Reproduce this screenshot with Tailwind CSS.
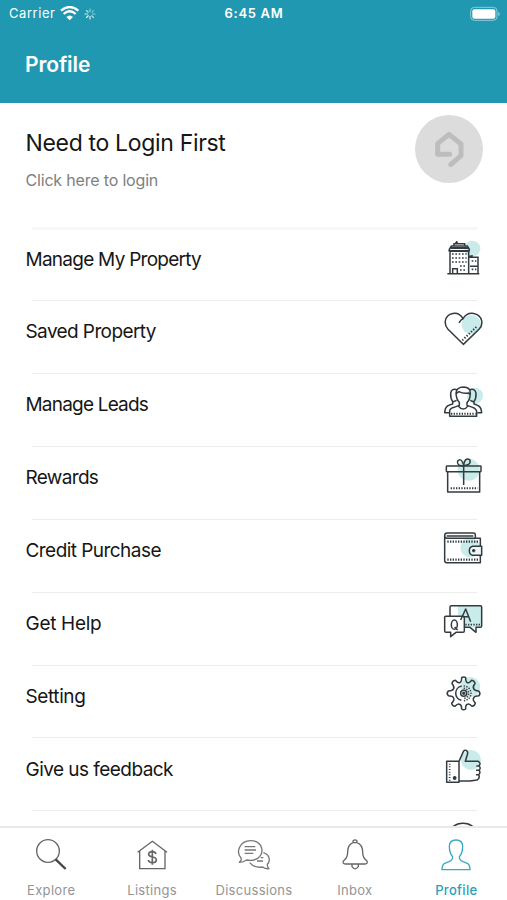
<!DOCTYPE html>
<html lang="en">
<head>
<meta charset="utf-8">
<title>Profile</title>
<script src="https://cdn.jsdelivr.net/npm/@tailwindcss/browser@4"></script>
</head>
<body class="bg-white font-['Inter',sans-serif]">
<div class="flex flex-col w-[507px] h-[900px] overflow-hidden">
  <header class="h-[103px] shrink-0 bg-[#2198b1] text-white">
    <div class="grid grid-cols-3 items-center h-[27px] pl-[9px] pr-[6px]">
      <div class="flex items-center text-[13px] tracking-[0.55px]">
        <span>Carrier</span>
        <svg class="w-[19px] h-[15px] ml-[5px]" viewBox="184 16 57 45" fill="none" stroke="#fff" stroke-width="7"><path d="M187 30Q213 8 239 30M195 40Q213 24 231 40"/><path d="M203 49Q213 40 223 49L213 59Z" fill="#fff" stroke="none"/></svg>
        <svg class="w-[12px] h-[12px] ml-[5px]" viewBox="0 0 24 24" stroke="#fff" stroke-width="2.2" stroke-linecap="round"><path d="M12 2v5" opacity=".6"/><path d="M19 5l-3 3.500" opacity=".5"/><path d="M22 12h-5" opacity=".5"/><path d="M19 19l-3.500-3.500" opacity=".7"/><path d="M12 22v-5" opacity=".9"/><path d="M5 19l3.500-3.500"/><path d="M2 12h5" opacity=".8"/><path d="M5 5l3.500 3.500" opacity=".7"/></svg>
      </div>
      <div class="text-center text-[13px] font-semibold tracking-[0.7px] pr-[2px] pt-[1px]">6:45 AM</div>
      <svg class="w-[32px] h-[16px] justify-self-end" viewBox="208 16 96 48"><rect x="213" y="20" width="79" height="39" rx="11" fill="none" stroke="#8fcbd8" stroke-width="3"/><rect x="218" y="26" width="69" height="28" rx="6" fill="#fff"/><path d="M296 33q9 7 0 14z" fill="#8fcbd8"/></svg>
    </div>
    <h1 class="pl-[25px] pt-[22px] text-[21px] leading-[32px] font-semibold tracking-[-0.1px]">Profile</h1>
  </header>

  <main class="flex-1 min-h-0 overflow-hidden">
    <section class="flex justify-between h-[123.500px] pl-[25.500px] pr-[24.500px] pt-[12px]">
      <div>
        <h2 class="pt-[13px] text-[23px] leading-[30px] tracking-[-0.33px] text-[#161616]">Need to Login First</h2>
        <p class="pt-[11px] text-[16px] leading-[22px] tracking-[-0.18px] text-[#808080]">Click here to login</p>
      </div>
      <svg class="w-[68px] h-[68px]" viewBox="44 346 204 204"><circle cx="146" cy="448" r="102" fill="#dcdcdc"/><path d="M148 464H112V432L146 404L182 433V468L151 495" fill="none" stroke="#bdbdbd" stroke-width="15" stroke-linecap="round" stroke-linejoin="round"/></svg>
    </section>
    <div class="h-[3px] ml-[32px] mr-[30px] bg-[#f7f7f7]"></div>

    <ul class="text-[19px] leading-[24px] tracking-[-0.5px] text-[#161616]">
      <li class="h-[70.800px] pt-[8.800px]">
        <div class="flex justify-between pl-[25.500px] pr-[24px]"><span class="pt-[10px] tracking-[-0.74px]">Manage My Property</span>
        <svg class="w-[40px] h-[40px]" viewBox="39 39 120 120" fill="none" stroke="#333b40" stroke-width="4.5"><circle cx="127" cy="71" r="24" fill="#c9ebea" stroke="none"/><path d="M60 146V79H116V146M118 97H144V146M52 146H148M55 77H120M57 75L64 63H112L119 75M72 62V56H104V62M80 56V48M75 54H84M68 145V131H82V145M118 94H126V90M120 124H143"/><path d="M62 69H115" stroke-width="6"/><path d="M66 87H110M66 99H110M66 111H110M90 123H110M90 135H110M125 108H139M125 133H139" stroke-width="5" stroke-dasharray="5 5"/></svg></div>
      </li>
      <li class="h-[72.850px] pt-[9.850px] relative before:absolute before:top-0 before:left-[32px] before:right-[30px] before:h-px before:bg-[#ececec]">
        <div class="flex justify-between pl-[25.500px] pr-[24px]"><span class="pt-[10px] tracking-[-0.6px]">Saved Property</span>
        <svg class="w-[40px] h-[40px]" viewBox="39 258 120 120" fill="none" stroke="#333b40" stroke-width="4.5"><circle cx="124" cy="302" r="29" fill="#c9ebea" stroke="none"/><path d="M100 361L54 316Q44 305 46 291C50 266 84 258 99 284C115 258 149 266 155 290Q158 305 147 316L100 361ZM99 284Q92 287 87 297"/><path d="M97 349L142 306" stroke-width="6" stroke-dasharray="4 5"/></svg></div>
      </li>
      <li class="h-[72.850px] pt-[9.850px] relative before:absolute before:top-0 before:left-[32px] before:right-[30px] before:h-px before:bg-[#ececec]">
        <div class="flex justify-between pl-[25.500px] pr-[24px]"><span class="pt-[10.500px] tracking-[-0.8px]">Manage Leads</span>
        <svg class="w-[40px] h-[40px]" viewBox="39 27 120 120" fill="none" stroke="#333b40" stroke-width="4.5" stroke-linejoin="round"><circle cx="135" cy="65" r="24" fill="#c9ebea" stroke="none"/><path d="M59 127V111Q60 103 72 100L88 94V85Q79 77 78 57Q80 39 101 39Q121 40 121 57Q121 77 111 86V94L128 100Q139 104 140 112V127ZM78 59L87 53Q99 60 116 57L121 62M84 95Q100 115 115 95"/><path d="M81 47Q65 42 62 57Q61 73 68 83V90Q49 94 46 105L44 116H58M68 84L80 79M119 47Q134 42 138 57Q139 73 132 83V90Q149 94 153 105L155 116H142M132 84L121 79"/><path d="M63 119H137" stroke-width="6" stroke-dasharray="4 4"/></svg></div>
      </li>
      <li class="h-[72.850px] pt-[9.850px] relative before:absolute before:top-0 before:left-[32px] before:right-[30px] before:h-px before:bg-[#ececec]">
        <div class="flex justify-between pl-[25.500px] pr-[24px]"><span class="pt-[10.500px] tracking-[-0.67px]">Rewards</span>
        <svg class="w-[40px] h-[40px]" viewBox="39 245 120 120" fill="none" stroke="#333b40" stroke-width="4.5" stroke-linejoin="round"><circle cx="116" cy="286" r="33" fill="#c9ebea" stroke="none"/><rect x="49" y="275" width="104" height="17" rx="2"/><path d="M53 292V353H149V292M101 276V332M101 275Q79 275 83 260Q93 248 101 272Q105 248 119 256Q126 271 101 274" /><path d="M62 342H143" stroke-width="6" stroke-dasharray="4 4"/></svg></div>
      </li>
      <li class="h-[72.850px] pt-[9.850px] relative before:absolute before:top-0 before:left-[32px] before:right-[30px] before:h-px before:bg-[#ececec]">
        <div class="flex justify-between pl-[25.500px] pr-[24px]"><span class="pt-[10.500px] tracking-[-0.55px]">Credit Purchase</span>
        <svg class="w-[40px] h-[40px]" viewBox="39 29 120 120" fill="none" stroke="#333b40" stroke-width="4.5" stroke-linejoin="round"><circle cx="120" cy="85" r="29" fill="#c9ebea" stroke="none"/><path d="M151 80V57H51Q44 56 44 49Q44 41 52 41H130Q136 41 136 47V56M44 49V125Q45 130 50 130H151V109M50 50H130"/><path d="M155 81H128Q118 84 118 94Q118 105 128 108H155Z" fill="#edf7f7"/><path d="M126 94H136M131 89V99" stroke-width="5"/><path d="M52 67H148M52 121H148" stroke-width="7" stroke-dasharray="4 4"/></svg></div>
      </li>
      <li class="h-[72.850px] pt-[9.850px] relative before:absolute before:top-0 before:left-[32px] before:right-[30px] before:h-px before:bg-[#ececec]">
        <div class="flex justify-between pl-[25.500px] pr-[24px]"><span class="pt-[10.500px] tracking-[-0.3px]">Get Help</span>
        <svg class="w-[40px] h-[40px]" viewBox="39 247 120 120" fill="none" stroke="#333b40" stroke-width="4.5" stroke-linejoin="round"><path d="M84 258H155V323H84Z" fill="#c9ebea" stroke="none"/><path d="M60 289V262Q60 258 64 258H151Q155 258 155 262V319Q155 323 151 323H138V338L120 323H103"/><path d="M47 290H99Q103 290 103 294V334Q103 338 99 338H78L62 351V338H48Q44 338 44 334V293Q44 290 47 290Z" fill="#fff"/><path d="M92 301L107 268L122 306M99 291H116"/><ellipse cx="73" cy="315" rx="9" ry="14"/><path d="M74 322L83 331"/><path d="M106 315H150" stroke-width="5" stroke-dasharray="4 4"/></svg></div>
      </li>
      <li class="h-[72.850px] pt-[9.850px] relative before:absolute before:top-0 before:left-[32px] before:right-[30px] before:h-px before:bg-[#ececec]">
        <div class="flex justify-between pl-[25.500px] pr-[24px]"><span class="pt-[10.500px] tracking-[-0.4px]">Setting</span>
        <svg class="w-[40px] h-[40px]" viewBox="39 31 120 120" fill="none" stroke="#333b40" stroke-width="4.5" stroke-linejoin="round"><circle cx="121" cy="70" r="30" fill="#c9ebea" stroke="none"/><path d="M95 42Q101 38 107 42Q107 56 113 57Q118 59 125 50Q134 51 135 60Q127 68 131 75Q134 82 146 82Q153 89 147 96Q133 96 131 103Q127 109 136 118Q134 127 126 128Q118 119 112 122Q106 124 107 136Q101 141 95 136Q95 124 89 122Q83 119 75 128Q67 127 65 119Q74 109 71 103Q68 96 55 96Q48 89 55 82Q68 82 71 75Q74 68 66 60Q67 51 76 50Q83 59 89 57Q95 55 95 42Z"/><circle cx="101" cy="89" r="9"/><circle cx="101" cy="89" r="2.500" fill="#333b40"/><path d="M95 67A22 22 0 0 0 94 110"/><path d="M101 67A22 22 0 0 1 101 111M101 74A15 15 0 0 1 101 104" stroke-dasharray="4 4"/></svg></div>
      </li>
      <li class="h-[72.850px] pt-[9.850px] relative before:absolute before:top-0 before:left-[32px] before:right-[30px] before:h-px before:bg-[#ececec]">
        <div class="flex justify-between pl-[25.500px] pr-[24px]"><span class="pt-[10.500px] tracking-[-0.54px]">Give us feedback</span>
        <svg class="w-[40px] h-[40px]" viewBox="39 249 120 120" fill="none" stroke="#333b40" stroke-width="4.5" stroke-linejoin="round"><circle cx="123" cy="288" r="30" fill="#c9ebea" stroke="none"/><path d="M50 292H87V355H50ZM87 292L100 263Q104 256 110 260Q115 264 112 272L106 292H145Q154 298 147 306Q154 311 147 319Q153 325 146 332Q151 343 141 348L120 351H87M139 306H147M138 319H147M138 332H146"/><path d="M59 299V350" stroke-width="5" stroke-dasharray="3 5"/><circle cx="74" cy="342" r="3.500" fill="#333b40"/></svg></div>
      </li>
      <li class="h-[72.850px] pt-[9.850px] relative before:absolute before:top-0 before:left-[32px] before:right-[30px] before:h-px before:bg-[#ececec]">
        <div class="flex justify-end pr-[24px]">
        <svg class="w-[40px] h-[40px]" viewBox="39 466 120 120" fill="none" stroke="#333b40" stroke-width="4.5"><ellipse cx="99" cy="526" rx="50" ry="50"/></svg></div>
      </li>
    </ul>
  </main>

  <nav class="grid grid-cols-5 h-[74px] shrink-0 relative bg-white border-t-2 border-[#e9e9e9] text-[13px] leading-[16px] tracking-[0.3px] text-[#949494]">
    <div class="flex flex-col items-center pt-[9px] pl-[1px] gap-[11px]">
      <svg class="w-[34px] h-[34px]" viewBox="102 111 102 102" fill="none" stroke="#666" stroke-width="4"><circle cx="144" cy="153" r="34"/><path d="M167 178L197 207" stroke="#444" stroke-width="7"/></svg>
      <span>Explore</span>
    </div>
    <div class="flex flex-col items-center pt-[9px] gap-[11px]">
      <svg class="w-[34px] h-[34px]" viewBox="405 111 102 102" fill="none" stroke="#666" stroke-width="4"><path d="M413 157L457 124L501 157M419 153V206H495V153"/><path d="M468 162Q466 155 457 155Q446 155 446 163Q446 169 457 171Q469 173 469 180Q469 188 457 188Q446 188 445 180M457 149V194" stroke-width="5"/></svg>
      <span>Listings</span>
    </div>
    <div class="flex flex-col items-center pt-[9px] pl-[1px] gap-[11px]">
      <svg class="w-[34px] h-[34px]" viewBox="111 111 102 102" fill="none" stroke="#777" stroke-width="4" stroke-linejoin="round"><path d="M118 187Q126 181 123 174Q111 161 118 143Q128 122 152 122Q178 122 185 144Q189 164 173 175Q157 184 140 180Q130 187 118 187ZM134 140H166M134 150H168M134 160H160"/><path d="M190 158Q207 163 208 179Q208 187 202 193Q201 201 207 206Q196 207 188 201Q163 205 149 188M182 173H190M171 183H189"/></svg>
      <span>Discussions</span>
    </div>
    <div class="flex flex-col items-center pt-[9px] gap-[11px]">
      <svg class="w-[34px] h-[34px]" viewBox="414 111 102 102" fill="none" stroke="#666" stroke-width="4" stroke-linejoin="round"><path d="M459 128V123Q465 116 471 123V128Q488 134 488 157Q488 174 501 183Q504 191 495 192H436Q427 191 430 183Q443 174 443 157Q443 134 459 128H471M456 193V200Q465 213 475 200V193"/></svg>
      <span>Inbox</span>
    </div>
    <div class="flex flex-col items-center pt-[9px] gap-[11px] text-[#2a9fb8]">
      <svg class="w-[34px] h-[34px]" viewBox="718 111 102 102" fill="none" stroke="#38a9c1" stroke-width="4" stroke-linejoin="round"><path d="M759 170Q749 160 749 139Q749 120 769 120Q789 120 789 139Q789 160 779 170Q778 180 790 185L803 190Q811 194 811 209H727Q727 194 735 190L748 185Q760 180 759 170Z"/></svg>
      <span class="font-medium">Profile</span>
    </div>
  </nav>
</div>
</body>
</html>
